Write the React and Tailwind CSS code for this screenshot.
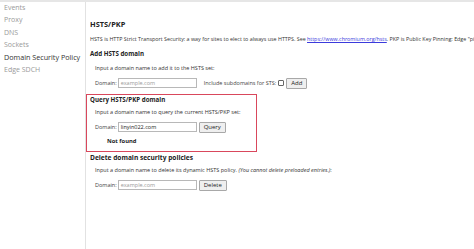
import React from "react";

function DomainRow({ value, button, extra }) {
  return (
    <div className="flex h-[14px] items-center pl-[5px]">
      <span className="mr-[1px] text-[#444]">Domain:</span>
      <div className="flex h-[10px] w-[79px] items-center border border-[#b8b8b8] bg-white px-[2px]">
        {value ? (
          <span className="text-[#222]">{value}</span>
        ) : (
          <span className="text-[#9a9a9a]">example.com</span>
        )}
      </div>
      {extra}
      <button className="ml-[2px] flex h-[11px] items-center rounded-[1px] border border-[#a8a8a8] bg-[#efefef] px-[4px] text-[6px] text-[#222]">
        {button}
      </button>
    </div>
  );
}

function App() {
  const nav = ["Events", "Proxy", "DNS", "Sockets", "Domain Security Policy", "Edge SDCH"];

  return (
    <div
      className="flex h-[249px] w-[474px] overflow-hidden border-t-[2px] border-[#e6e6e6] bg-white text-[5.5px] text-[#333]"
      style={{ fontFamily: '"Open Sans", "Liberation Sans", sans-serif' }}
    >
      <div className="w-[86px] shrink-0 border-r border-[#e2e2e2] pl-[4px]">
        {nav.map((item) => (
          <div
            key={item}
            className={
              item === "Domain Security Policy"
                ? "flex h-[12.4px] items-center text-[7.2px] text-[#333]"
                : "flex h-[12.4px] items-center text-[7px] text-[#9a9a9a]"
            }
          >
            {item}
          </div>
        ))}
      </div>

      <div className="min-w-0 flex-1 overflow-hidden whitespace-nowrap pt-[16px]">
        <div className="pl-[4px]">
          <div className="flex h-[14px] items-center text-[7.4px] font-bold text-[#222]">HSTS/PKP</div>
          <div className="flex h-[15px] items-center text-[5.35px]">
            HSTS is HTTP Strict Transport Security: a way for sites to elect to always use HTTPS. See&nbsp;
            <a className="text-[#3b3bdc] underline">https://www.chromium.org/hsts</a>. PKP is Public Key Pinning: Edge "pins"
          </div>
          <div className="flex h-[14px] items-center text-[6.2px] font-bold text-[#222]">Add HSTS domain</div>
          <div className="flex h-[15px] items-center pl-[5px]">Input a domain name to add it to the HSTS set:</div>
          <DomainRow
            button="Add"
            extra={
              <span className="ml-[7px] flex items-center text-[#444]">
                Include subdomains for STS:
                <span className="ml-[2px] inline-block h-[6px] w-[6px] rounded-[1px] border border-[#666] bg-white" />
              </span>
            }
          />
        </div>

        <div className="mt-[4px] h-[58px] w-[171px] border border-[#d9475c] pl-[3px]">
          <div className="flex h-[10px] items-center text-[6.2px] font-bold text-[#222]">Query HSTS/PKP domain</div>
          <div className="flex h-[15px] items-center pl-[5px]">Input a domain name to query the current HSTS/PKP set:</div>
          <DomainRow value="linyin022.com" button="Query" />
          <div className="flex h-[14px] items-center pl-[17px] text-[5.8px] font-bold text-[#222]">Not found</div>
        </div>

        <div className="pl-[4px]">
          <div className="flex h-[11px] items-center text-[6.6px] font-bold text-[#222]">Delete domain security policies</div>
          <div className="flex h-[15px] items-center pl-[5px]">
            Input a domain name to delete its dynamic HSTS policy.&nbsp;<i>(You cannot delete preloaded entries.)</i>:
          </div>
          <DomainRow button="Delete" />
        </div>
      </div>
    </div>
  );
}

export default App;
